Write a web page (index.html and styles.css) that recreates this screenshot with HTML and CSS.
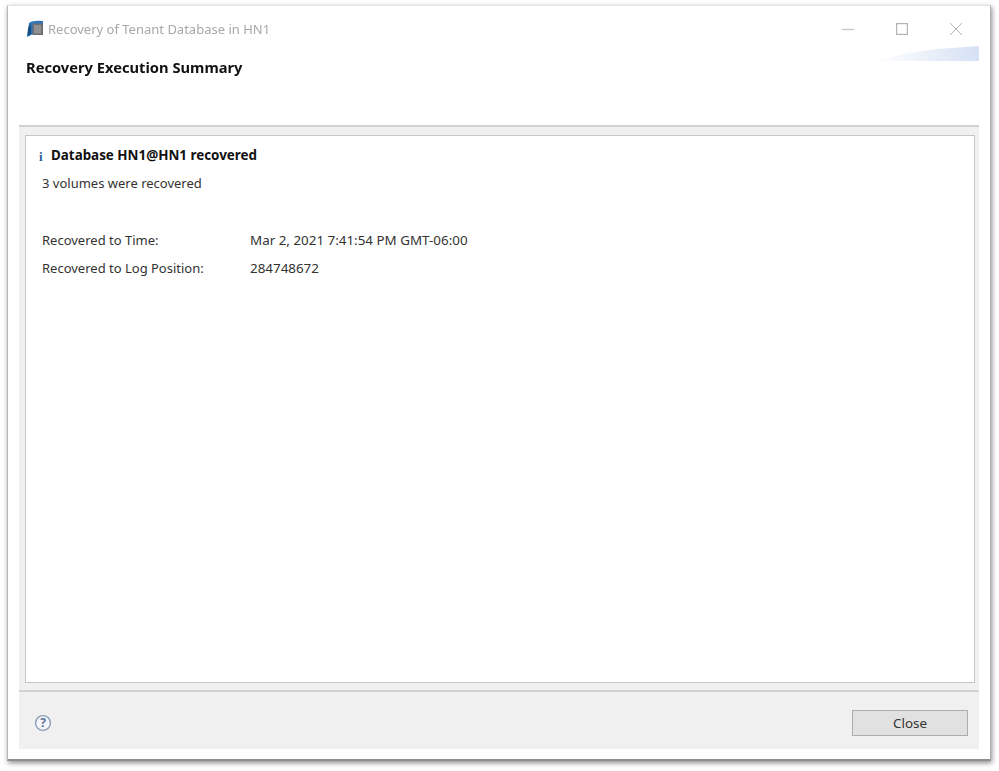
FILE: index.html
```html
<!DOCTYPE html>
<html lang="en">
  <head>
    <meta charset="UTF-8" />
    <meta name="viewport" content="width=device-width, initial-scale=1.0" />
    <title>Recovery of Tenant Database in HN1</title>
    <link rel="stylesheet" href="styles.css">
  </head>
  <body>
    <div class="window">
      <div class="titlebar">
        <div class="title">
          <svg class="app-icon" width="18" height="18" viewBox="0 0 18 18">
            <path d="M3 3 Q7 0 17 1 L17 4 L8 4 L7 14 L1 17 Z" fill="#2f76b8" />
            <path d="M2 8 L5 4 L5 14 L1.5 16 Z" fill="#174f80" />
            <rect x="6.5" y="3.5" width="10.5" height="11.5" fill="#6d6f72" />
            <rect x="8" y="5" width="7" height="8.5" fill="#8e9092" />
          </svg>
          <span>Recovery of Tenant Database in HN1</span>
        </div>
        <div class="window-controls">
          <svg width="12" height="12" viewBox="0 0 12 12"><path d="M0 6.5 H12" stroke="#c4c4c4" stroke-width="1.2" /></svg>
          <svg width="12" height="12" viewBox="0 0 12 12"><rect x="0.6" y="0.6" width="10.8" height="10.8" fill="none" stroke="#b4b4b4" stroke-width="1.2" /></svg>
          <svg width="12" height="12" viewBox="0 0 12 12"><path d="M0 0 L12 12 M12 0 L0 12" stroke="#b4b4b4" stroke-width="1" /></svg>
        </div>
      </div>

      <div class="header">
        <h1>Recovery Execution Summary</h1>
        <div class="header-swoosh"></div>
      </div>

      <div class="content">
        <div class="panel">
          <div class="status">
            <span class="info-icon">i</span>
            <span>Database HN1@HN1 recovered</span>
          </div>
          <div class="volumes">3 volumes were recovered</div>
          <div class="details">
            <span>Recovered to Time:</span>
            <span class="value">Mar 2, 2021 7:41:54 PM GMT-06:00</span>
            <span>Recovered to Log Position:</span>
            <span class="value">284748672</span>
          </div>
        </div>
      </div>

      <div class="footer">
        <svg class="help-icon" width="18" height="18" viewBox="0 0 18 18">
          <circle cx="9" cy="9" r="7.4" fill="#f4f6f9" stroke="#8c9db8" stroke-width="1.4" />
          <text x="9" y="13.2" text-anchor="middle" class="help-mark">?</text>
        </svg>
        <button class="close-btn">Close</button>
      </div>
    </div>
  </body>
</html>
```

FILE: styles.css
```css
html,
body {
  margin: 0;
  height: 100%;
  background-color: white;
}

body {
  padding: 5px 8px 11px 7px;
  box-sizing: border-box;
  height: 771px;
  overflow: hidden;
  font-family: "Noto Sans", "Open Sans", sans-serif;
  font-size: 13px;
  color: #333;
}

/* the screenshot is a little soft, so the whole window gets a slight blur */
.window {
  display: flex;
  flex-direction: column;
  box-sizing: border-box;
  height: 756px;
  padding: 0 11px 10px 11px;
  background-color: white;
  border-top: 1px solid #e4e4e4;
  border-left: 1px solid #b8b8b8;
  border-right: 1px solid #b0b0b0;
  border-bottom: 2px solid #8e8e8e;
  box-shadow: 1px 2px 5px rgba(0, 0, 0, 0.45);
  filter: blur(0.35px);
}

/* Title bar */
.titlebar {
  display: flex;
  justify-content: space-between;
  align-items: center;
  box-sizing: border-box;
  height: 43px;
  padding-top: 2px;
  flex-shrink: 0;
}

.title {
  display: flex;
  align-items: center;
  gap: 4px;
  padding-left: 7px;
  font-size: 13px;
  color: #a8a8a8;
}

.app-icon {
  flex-shrink: 0;
}

.window-controls {
  display: flex;
  gap: 42px;
  padding-right: 17px;
}

/* Header */
.header {
  position: relative;
  height: 76px;
  flex-shrink: 0;
  border-bottom: 2px solid #d2d2d2;
}

.header h1 {
  margin: 0;
  padding: 8px 0 0 7px;
  font-size: 14.7px;
  line-height: 20px;
  font-weight: 700;
  color: #111;
}

.header-swoosh {
  position: absolute;
  top: -3px;
  right: 0;
  width: 104px;
  height: 15px;
  background: linear-gradient(to right, rgba(214, 225, 245, 0), #d6e1f5);
  clip-path: polygon(0 100%, 30% 50%, 60% 20%, 100% 0, 100% 100%);
}

/* Panel */
.content {
  flex: 1;
  padding: 8px 4px 7px 6px;
  background-color: #f0f0f0;
  display: flex;
  min-height: 0;
}

.panel {
  flex: 1;
  box-sizing: border-box;
  padding: 9px 16px;
  background-color: white;
  border: 1px solid #c6c6c6;
}

.status {
  display: flex;
  align-items: center;
  height: 20px;
  font-weight: 700;
  font-size: 13.4px;
  color: #111;
}

.info-icon {
  width: 12px;
  margin-left: -3px;
  font-family: "Liberation Serif", serif;
  font-size: 13px;
  color: #2a5f9a;
  position: relative;
  top: 2px;
}

.volumes {
  margin-top: 8px;
  height: 20px;
  line-height: 20px;
}

.details {
  display: grid;
  grid-template-columns: 208px auto;
  justify-content: start;
  row-gap: 8px;
  margin-top: 37px;
  line-height: 20px;
}

.value {
  font-size: 13.4px;
}

/* Footer */
.footer {
  display: flex;
  justify-content: space-between;
  align-items: center;
  box-sizing: border-box;
  height: 59px;
  flex-shrink: 0;
  padding: 4px 11px 0 15px;
  background-color: #f0f0f0;
  border-top: 2px solid #d2d2d2;
}

.help-icon {
  flex-shrink: 0;
}

.help-mark {
  font-family: "Noto Sans", sans-serif;
  font-size: 12px;
  font-weight: 700;
  fill: #5d7194;
}

.close-btn {
  width: 116px;
  height: 26px;
  padding: 0;
  font-family: inherit;
  font-size: 13.4px;
  color: #333;
  background-color: #e1e1e1;
  border: 1px solid #adadad;
}
```
